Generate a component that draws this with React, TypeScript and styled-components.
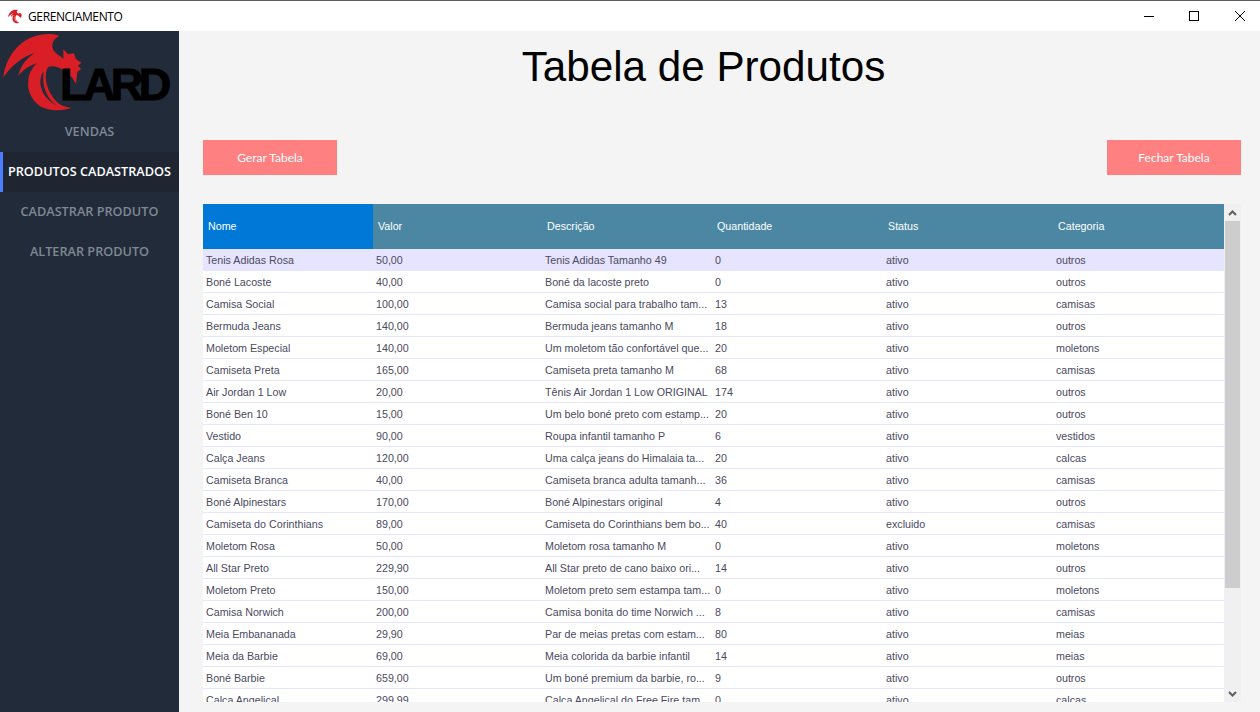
import React from "react";
import styled, { createGlobalStyle } from "styled-components";

const Global = createGlobalStyle`
  html, body { margin: 0; padding: 0; height: 712px; overflow: hidden; background: #f4f4f4; }
  #root { height: 712px; }
`;

const Page = styled.div`
  display: flex;
  flex-direction: column;
  width: 1260px;
  height: 712px;
  overflow: hidden;
`;

const TitleBar = styled.header`
  display: flex;
  align-items: center;
  box-sizing: border-box;
  height: 31px;
  flex: none;
  background: #fff;
  border-top: 1px solid #5c5c5c;
  padding-left: 8px;
  font: 12px "Open Sans", "Liberation Sans", sans-serif;
  color: #000;
`;

const AppTitle = styled.span`
  margin-left: 6px;
  flex: 1;
  letter-spacing: -0.38px;
`;

const WindowButtons = styled.div`
  display: flex;
  align-items: center;
  gap: 35px;
  margin: -1px 15px 0 0;
`;

const WindowButton = styled.div<{ $close?: boolean }>`
  width: 10px;
  height: 10px;
  display: flex;
  margin-left: ${(p) => (p.$close ? "1px" : "0")};
`;

const Body = styled.div`
  display: flex;
  flex: 1;
  min-height: 0;
`;

const Sidebar = styled.nav`
  width: 179px;
  flex: none;
  background: #222b3a;
  display: flex;
  flex-direction: column;
`;

const LogoArea = styled.div`
  position: relative;
  height: 81px;
  flex: none;
`;

const LogoText = styled.span`
  position: absolute;
  left: 60px;
  top: 31px;
  font: 800 45px/45px "Liberation Sans", sans-serif;
  letter-spacing: -4.6px;
  color: #000;
  -webkit-text-stroke: 1px #000;
`;

const NavItem = styled.div<{ $active?: boolean }>`
  box-sizing: border-box;
  height: 40px;
  display: flex;
  align-items: center;
  justify-content: center;
  font: 600 12.7px "Open Sans", "Liberation Sans", sans-serif;
  color: ${(p) => (p.$active ? "#ffffff" : "#7f8893")};
  background: ${(p) => (p.$active ? "#1f2632" : "transparent")};
  border-left: 3px solid ${(p) => (p.$active ? "#4a7dff" : "transparent")};
  padding: 0 3px 2px 0;
  white-space: nowrap;
`;

const Main = styled.main`
  flex: 1;
  min-width: 0;
  display: flex;
  flex-direction: column;
  padding: 0 19px 0 24px;
`;

const Title = styled.h1`
  box-sizing: border-box;
  height: 109px;
  margin: 0;
  padding: 12px 37px 0 0;
  text-align: center;
  font: 400 42.2px/48px "Liberation Sans", sans-serif;
  color: #000;
`;

const Toolbar = styled.div`
  display: flex;
  justify-content: space-between;
  margin-bottom: 29px;
`;

const ActionButton = styled.button`
  width: 134px;
  height: 35px;
  border: 0;
  padding: 0;
  background: #ff8080;
  color: #fff;
  font: 400 12px Lato, "Liberation Sans", sans-serif;
`;

const TableFrame = styled.div`
  display: flex;
  height: 498px;
`;

const TableClip = styled.div`
  width: 1021px;
  flex: none;
  overflow: hidden;
  background: #fff;
`;

const ProductTable = styled.table`
  width: 1021px;
  table-layout: fixed;
  border-collapse: separate;
  border-spacing: 0;
  font: 10.7px "Liberation Sans", sans-serif;
`;

const Column = styled.col<{ $width: number }>`
  width: ${(p) => p.$width}px;
`;

const HeaderCell = styled.th<{ $selected?: boolean }>`
  box-sizing: border-box;
  height: 45px;
  padding: 0 0 2px 5px;
  text-align: left;
  font-weight: 400;
  color: #fff;
  background: ${(p) => (p.$selected ? "#0078d7" : "#4b87a3")};
`;

const Row = styled.tr<{ $selected?: boolean }>`
  background: ${(p) => (p.$selected ? "#e7e4ff" : "#fff")};
`;

const Cell = styled.td`
  box-sizing: border-box;
  height: 22px;
  padding: 0 0 0 3px;
  border-bottom: 1px solid #e7e4ff;
  color: #4a4a5e;
  white-space: nowrap;
  overflow: hidden;
`;

const ScrollTrack = styled.div`
  width: 17px;
  flex: none;
  background: #f0f0f0;
  display: flex;
  flex-direction: column;
  align-items: center;
`;

const ScrollArrow = styled.div`
  height: 17px;
  flex: none;
  display: flex;
  align-items: center;
  justify-content: center;
`;

const ScrollThumb = styled.div`
  width: 15px;
  height: 367px;
  flex: none;
  background: #cdcdcd;
`;

const ScrollSpace = styled.div`
  flex: 1;
`;

const WING =
  "M10 232C16 180 48 128 100 110C128 100 158 100 178 108C160 118 152 132 160 150C168 162 180 168 190 176L190 148L204 162L222 160L228 178L244 188L234 197L243 207L232 216L228 252L216 232L205 226C192 206 165 194 146 200C132 214 130 270 178 312C190 320 205 323 215 323C185 335 130 335 105 305C88 285 82 262 85 245C84 225 95 205 110 190C88 198 68 210 55 228C60 200 78 175 105 158C68 170 35 195 10 232Z";
const SLIVER = "M131 214C112 240 118 290 172 318C142 298 124 262 131 214Z";

const DragonIcon = () => (
  <svg width="14" height="15" viewBox="10 100 235 235" aria-hidden="true">
    <path d={WING} fill="#d81f26" />
    <path d={SLIVER} fill="#fff" />
  </svg>
);

const Logo = () => (
  <svg width="179" height="81" viewBox="0 93 537 243" aria-hidden="true">
    <path d={WING} fill="#d91e25" />
    <path d={SLIVER} fill="#222b3a" />
  </svg>
);

const columns = ["Nome", "Valor", "Descrição", "Quantidade", "Status", "Categoria"];
const columnWidths = [170, 169, 170, 171, 170, 171];

const rows: string[][] = [
  ["Tenis Adidas Rosa", "50,00", "Tenis Adidas Tamanho 49", "0", "ativo", "outros"],
  ["Boné Lacoste", "40,00", "Boné da lacoste preto", "0", "ativo", "outros"],
  ["Camisa Social", "100,00", "Camisa social para trabalho tam...", "13", "ativo", "camisas"],
  ["Bermuda Jeans", "140,00", "Bermuda jeans tamanho M", "18", "ativo", "outros"],
  ["Moletom Especial", "140,00", "Um moletom tão confortável que...", "20", "ativo", "moletons"],
  ["Camiseta Preta", "165,00", "Camiseta preta tamanho M", "68", "ativo", "camisas"],
  ["Air Jordan 1 Low", "20,00", "Tênis Air Jordan 1 Low ORIGINAL", "174", "ativo", "outros"],
  ["Boné Ben 10", "15,00", "Um belo boné preto com estamp...", "20", "ativo", "outros"],
  ["Vestido", "90,00", "Roupa infantil tamanho P", "6", "ativo", "vestidos"],
  ["Calça Jeans", "120,00", "Uma calça jeans do Himalaia ta...", "20", "ativo", "calcas"],
  ["Camiseta Branca", "40,00", "Camiseta branca adulta tamanh...", "36", "ativo", "camisas"],
  ["Boné Alpinestars", "170,00", "Boné Alpinestars original", "4", "ativo", "outros"],
  ["Camiseta do Corinthians", "89,00", "Camiseta do Corinthians bem bo...", "40", "excluido", "camisas"],
  ["Moletom Rosa", "50,00", "Moletom rosa tamanho M", "0", "ativo", "moletons"],
  ["All Star Preto", "229,90", "All Star preto de cano baixo ori...", "14", "ativo", "outros"],
  ["Moletom Preto", "150,00", "Moletom preto sem estampa tam...", "0", "ativo", "moletons"],
  ["Camisa Norwich", "200,00", "Camisa bonita do time Norwich ...", "8", "ativo", "camisas"],
  ["Meia Embananada", "29,90", "Par de meias pretas com estam...", "80", "ativo", "meias"],
  ["Meia da Barbie", "69,00", "Meia colorida da barbie infantil", "14", "ativo", "meias"],
  ["Boné Barbie", "659,00", "Um boné premium da barbie, ro...", "9", "ativo", "outros"],
  ["Calça Angelical", "299,99", "Calça Angelical do Free Fire tam...", "0", "ativo", "calcas"],
];

const navItems = ["VENDAS", "PRODUTOS CADASTRADOS", "CADASTRAR PRODUTO", "ALTERAR PRODUTO"];

export default function App() {
  return (
    <Page>
      <Global />
      <TitleBar>
        <DragonIcon />
        <AppTitle>GERENCIAMENTO</AppTitle>
        <WindowButtons>
          <WindowButton>
            <svg width="10" height="10" viewBox="0 0 10 10" aria-hidden="true">
              <path d="M0 5.5H10" stroke="#000" strokeWidth="1" />
            </svg>
          </WindowButton>
          <WindowButton>
            <svg width="10" height="10" viewBox="0 0 10 10" aria-hidden="true">
              <rect x="0.5" y="0.5" width="9" height="9" fill="none" stroke="#000" />
            </svg>
          </WindowButton>
          <WindowButton $close>
            <svg width="10" height="10" viewBox="0 0 10 10" aria-hidden="true">
              <path d="M0 0L10 10M10 0L0 10" stroke="#000" strokeWidth="1" />
            </svg>
          </WindowButton>
        </WindowButtons>
      </TitleBar>
      <Body>
        <Sidebar>
          <LogoArea>
            <Logo />
            <LogoText>LARD</LogoText>
          </LogoArea>
          {navItems.map((item) => (
            <NavItem key={item} $active={item === "PRODUTOS CADASTRADOS"}>
              {item}
            </NavItem>
          ))}
        </Sidebar>
        <Main>
          <Title>Tabela de Produtos</Title>
          <Toolbar>
            <ActionButton>Gerar Tabela</ActionButton>
            <ActionButton>Fechar Tabela</ActionButton>
          </Toolbar>
          <TableFrame>
            <TableClip>
              <ProductTable>
                <colgroup>
                  {columnWidths.map((w, i) => (
                    <Column key={i} $width={w} />
                  ))}
                </colgroup>
                <thead>
                  <tr>
                    {columns.map((c, i) => (
                      <HeaderCell key={c} $selected={i === 0}>
                        {c}
                      </HeaderCell>
                    ))}
                  </tr>
                </thead>
                <tbody>
                  {rows.map((r, i) => (
                    <Row key={r[0]} $selected={i === 0}>
                      {r.map((v, j) => (
                        <Cell key={j}>{v}</Cell>
                      ))}
                    </Row>
                  ))}
                </tbody>
              </ProductTable>
            </TableClip>
            <ScrollTrack>
              <ScrollArrow>
                <svg width="9" height="6" viewBox="0 0 9 6" aria-hidden="true">
                  <path d="M1 5L4.5 1.5L8 5" fill="none" stroke="#606060" strokeWidth="2" />
                </svg>
              </ScrollArrow>
              <ScrollThumb />
              <ScrollSpace />
              <ScrollArrow>
                <svg width="9" height="6" viewBox="0 0 9 6" aria-hidden="true">
                  <path d="M1 1L4.5 4.5L8 1" fill="none" stroke="#606060" strokeWidth="2" />
                </svg>
              </ScrollArrow>
            </ScrollTrack>
          </TableFrame>
        </Main>
      </Body>
    </Page>
  );
}
